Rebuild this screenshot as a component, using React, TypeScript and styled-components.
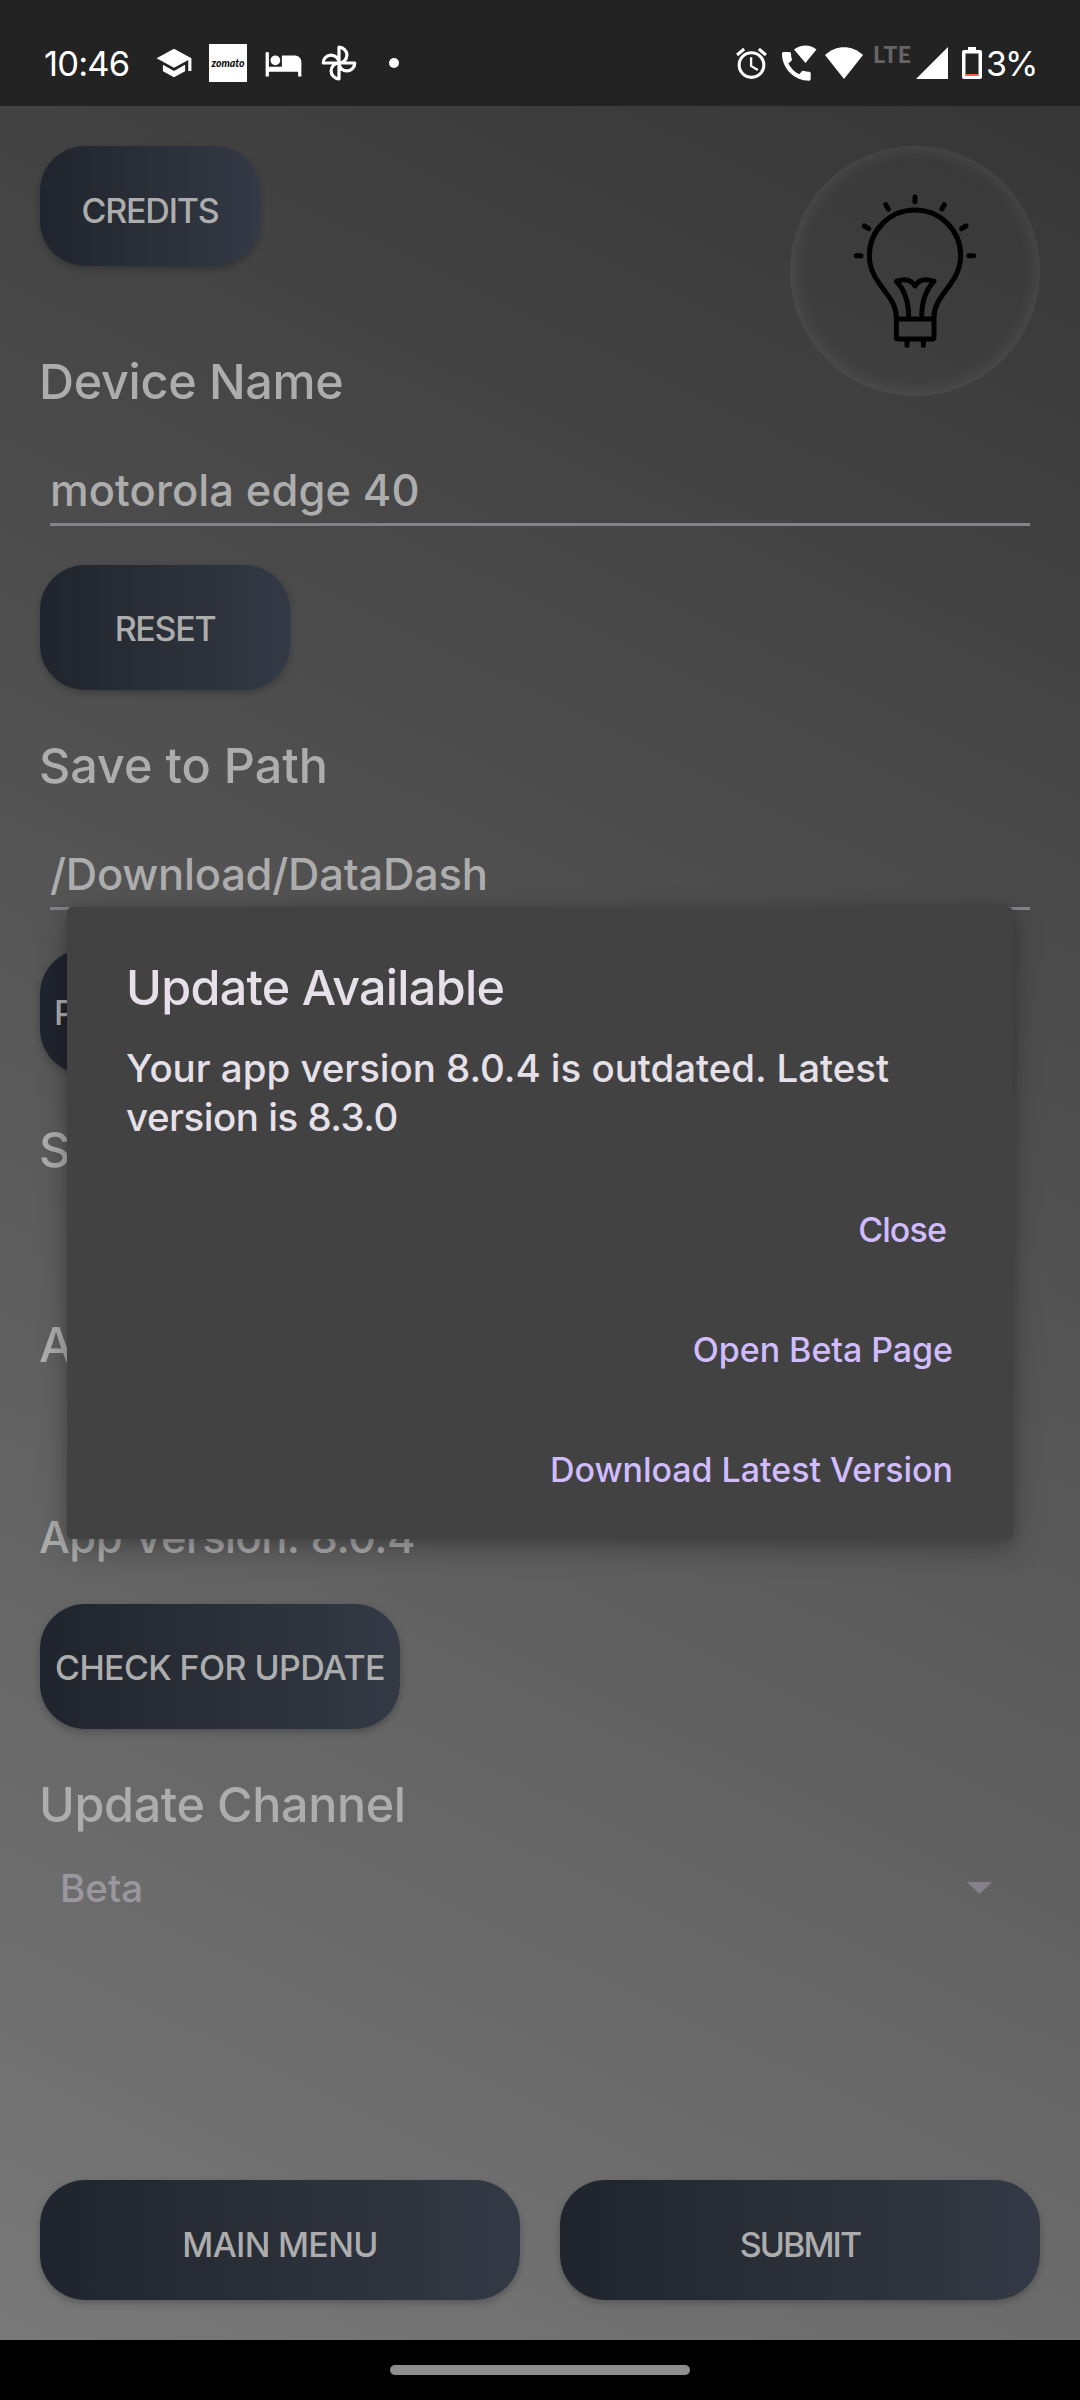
import React from "react";
import styled, { createGlobalStyle } from "styled-components";
import { MdSchool, MdHotel, MdAccessAlarm } from "react-icons/md";

const Global = createGlobalStyle`
  * { box-sizing: border-box; }
  body { margin: 0; background: #000; }
`;

const Screen = styled.div`
  position: relative;
  display: flex;
  flex-direction: column;
  width: 1080px;
  height: 2400px;
  overflow: hidden;
  font-family: Inter, "Open Sans", sans-serif;
  font-weight: 500;
  color: #adadad;
`;

const Text = styled.span<{ $size: number; $track?: number }>`
  font-size: ${(p) => p.$size}px;
  letter-spacing: ${(p) => p.$track ?? 0}px;
  white-space: nowrap;
`;

const StatusBar = styled.header`
  display: flex;
  align-items: center;
  justify-content: space-between;
  height: 106px;
  padding: 20px 45px 0 44px;
  background: #232323;
  color: #fff;
  font-weight: 400;
`;

const Cluster = styled.div`
  display: flex;
  align-items: center;
`;

const Slot = styled.div<{ $left?: number; $width?: number }>`
  display: flex;
  flex: none;
  margin-left: ${(p) => p.$left ?? 0}px;
  width: ${(p) => (p.$width ? `${p.$width}px` : "auto")};
`;

const Zomato = styled.div`
  display: flex;
  align-items: center;
  justify-content: center;
  width: 38px;
  height: 38px;
  background: #fff;
  color: #111;
  font: italic 900 10.5px/1 Lato, sans-serif;
`;

const Dot = styled.i`
  width: 10px;
  height: 10px;
  border-radius: 50%;
  background: #fff;
`;

const Network = styled.span`
  height: 32px;
  color: #656565;
  font: 900 23px/15px Lato, sans-serif;
  letter-spacing: 0.4px;
`;

const Content = styled.main`
  display: flex;
  flex-direction: column;
  height: 2234px;
  padding: 40px 40px 40px;
  background: linear-gradient(25.8deg, #787878, #363636);
`;

const Top = styled.div`
  display: flex;
  justify-content: space-between;
  height: 182px;
`;

const Button = styled.button<{ $w: number; $h?: number; $drop?: number; $start?: boolean }>`
  display: flex;
  flex: none;
  align-items: center;
  justify-content: ${(p) => (p.$start ? "flex-start" : "center")};
  width: ${(p) => p.$w}px;
  height: ${(p) => p.$h ?? 125}px;
  padding: ${(p) => p.$drop ?? 2}px 0 0 ${(p) => (p.$start ? 14 : 0)}px;
  border: 0;
  border-radius: 45px;
  background: linear-gradient(90deg, #20242d, #2a2f38 50%, #333a45);
  box-shadow: 0 3px 7px rgba(0, 0, 0, 0.24);
  color: #adadad;
  font-family: inherit;
  font-weight: inherit;
`;

const Lamp = styled.div`
  flex: none;
  width: 250px;
  height: 250px;
  border-radius: 50%;
  box-shadow: inset 0 0 20px rgba(255, 255, 255, 0.12);
`;

const Row = styled.div<{ $h: number; $drop?: number }>`
  display: flex;
  flex: none;
  align-items: center;
  height: ${(p) => p.$h}px;
  padding-top: ${(p) => p.$drop ?? 0}px;
  margin-left: -1px;
`;

const Field = styled.div<{ $gap?: number }>`
  display: flex;
  flex: none;
  align-items: center;
  height: 75px;
  margin: ${(p) => p.$gap ?? 0}px 10px 39px;
  padding-top: 6px;
  border-bottom: 3px solid #85828a;
`;

const Spinner = styled.div`
  display: flex;
  flex: none;
  align-items: center;
  justify-content: space-between;
  height: 82px;
  padding: 0 48px 0 20px;
  color: #9b979e;
`;

const Footer = styled.footer`
  display: flex;
  gap: 40px;
  margin-top: auto;
`;

const NavBar = styled.nav`
  display: flex;
  align-items: center;
  justify-content: center;
  height: 60px;
  background: #000;
`;

const Pill = styled.i`
  width: 300px;
  height: 10px;
  border-radius: 5px;
  background: #8e8e8e;
`;

const Dialog = styled.section`
  position: absolute;
  left: 67px;
  top: 907px;
  display: flex;
  flex-direction: column;
  width: 946px;
  height: 632px;
  padding: 48px 60px 0 59px;
  border-radius: 5px;
  background: #424242;
  box-shadow: 0 10px 30px rgba(0, 0, 0, 0.28), 0 2px 12px rgba(0, 0, 0, 0.12);
  color: #e6e0e9;
`;

const Heading = styled.h2`
  display: flex;
  align-items: center;
  height: 64px;
  margin: 0 0 25px;
  font-weight: inherit;
`;

const Message = styled.p`
  display: flex;
  flex-direction: column;
  margin: 0 0 27px;
  line-height: 49px;
`;

const Action = styled.button<{ $inset?: number }>`
  display: flex;
  flex: none;
  align-items: center;
  justify-content: flex-end;
  height: 120px;
  padding: 0 ${(p) => p.$inset ?? 0}px 0 0;
  border: 0;
  background: none;
  color: #d0bcff;
  font-family: inherit;
  font-weight: inherit;
`;

const Bulb = () => (
  <svg width="250" height="250" viewBox="90 78 750 750" fill="none" stroke="#000" strokeWidth="15" strokeLinecap="round" strokeLinejoin="round">
    <path d="M409 590C409 525 328 490 328 407A137 137 0 0 1 602 407C602 490 522 525 522 590V651Q522 657 516 657H415Q409 657 409 651ZM409 597H522" />
    <path d="M446 592C446 550 434 510 409 484Q449 470 465 498Q482 470 522 484C497 510 485 550 485 592" />
    <path d="M441 662V676M490 662V676" />
    <path d="M465 231V245M377 254L385 267M553 254L546 267M313 318L326 326M618 318L605 326M289 407H303M627 407H641" />
  </svg>
);

const Pinwheel = () => (
  <svg width="36" height="36" viewBox="0 0 36 36" fill="none" stroke="#fff" strokeWidth="3.2" strokeLinejoin="round">
    <path d="M18 18V2.200A7.900 7.900 0 0 1 18 18H33.800A7.900 7.900 0 0 1 18 18V33.800A7.900 7.900 0 0 1 18 18H2.200A7.900 7.900 0 0 1 18 18" />
  </svg>
);

const WifiCall = () => (
  <svg width="35" height="36" viewBox="0 0 35 36" fill="#fff">
    <path d="M23.500 18L12 4.500C19-.8 28-.8 34.500 4.500Z" />
    <path
      transform="translate(-4.800 2.200) scale(1.595)"
      d="M20.010 15.380c-1.230 0-2.420-.2-3.530-.56a.977.977 0 0 0-1.010.24l-1.570 1.970c-2.830-1.350-5.480-3.900-6.890-6.830l1.950-1.660c.27-.28.35-.67.24-1.020-.37-1.110-.56-2.300-.56-3.530 0-.54-.45-.99-.99-.99H4.190C3.650 3 3 3.240 3 3.990 3 13.280 10.730 21 20.010 21c.71 0 .99-.63.99-1.180v-3.450c0-.54-.45-.99-.99-.99z"
    />
  </svg>
);

export default function App() {
  return (
    <Screen>
      <Global />
      <StatusBar>
        <Cluster>
          <Slot $width={110.5}><Text $size={34.5} $track={-0.8}>10:46</Text></Slot>
          <MdSchool size={38} />
          <Slot $left={16.5}><Zomato>zomato</Zomato></Slot>
          <Slot $left={16.5}><MdHotel size={39} /></Slot>
          <Slot $left={18}><Pinwheel /></Slot>
          <Slot $left={32}><Dot /></Slot>
        </Cluster>
        <Cluster>
          <MdAccessAlarm size={37} />
          <Slot $left={12}><WifiCall /></Slot>
          <Slot $left={8}>
            <svg width="38" height="32" viewBox="0 0 38 32" fill="#fff"><path d="M19 32L0 8C11-2.500 27-2.500 38 8Z" /></svg>
          </Slot>
          <Slot $left={10} $width={37}><Network>LTE</Network></Slot>
          <Slot $left={6}>
            <svg width="32" height="32" viewBox="0 0 32 32" fill="#fff"><path d="M32 0V32H0Z" /></svg>
          </Slot>
          <Slot $left={13.5}>
            <svg width="20" height="32" viewBox="0 0 20 32"><path d="M6 0h8v3h4q2 0 2 2v25q0 2-2 2H2q-2 0-2-2V5q0-2 2-2h4ZM3.500 6.500v22h13v-22Z" fill="#fff" fillRule="evenodd" /><path d="M3.500 27h13v1.500h-13Z" fill="#f4633a" /></svg>
          </Slot>
          <Slot $left={4.5} $width={49}><Text $size={34} $track={-2}>3%</Text></Slot>
        </Cluster>
      </StatusBar>

      <Content>
        <Top>
          <Button $w={220} $h={120} $drop={9}><Text $size={34} $track={-1.2}>CREDITS</Text></Button>
          <Lamp><Bulb /></Lamp>
        </Top>
        <Row $h={107}><Text $size={48.5} $track={-0.3}>Device Name</Text></Row>
        <Field $gap={16}><Text $size={43.5} $track={0.08}>motorola edge 40</Text></Field>
        <Button $w={250}><Text $size={34} $track={-1.3}>RESET</Text></Button>
        <Row $h={145} $drop={6}><Text $size={48.5}>Save to Path</Text></Row>
        <Field><Text $size={43.5} $track={-0.25}>/Download/DataDash</Text></Field>
        <Button $w={320} $start><Text $size={34}>P</Text></Button>
        <Row $h={150}><Text $size={48.5}>S</Text></Row>
        <Row $h={240}><Text $size={48.5}>A</Text></Row>
        <Row $h={140} $drop={5}><Text $size={43.5} $track={-0.55}>App Version: 8.0.4</Text></Row>
        <Button $w={360}><Text $size={34} $track={-0.6}>CHECK FOR UPDATE</Text></Button>
        <Row $h={118} $drop={32}><Text $size={48.5} $track={-0.4}>Update Channel</Text></Row>
        <Spinner>
          <Text $size={38.5}>Beta</Text>
          <svg width="25" height="12" viewBox="0 0 25 12" fill="#85818b"><path d="M0 0H25L12.500 12Z" /></svg>
        </Spinner>
        <Footer>
          <Button $w={480} $h={120} $drop={9}><Text $size={34} $track={-0.7}>MAIN MENU</Text></Button>
          <Button $w={480} $h={120} $drop={9}><Text $size={34} $track={-1.9}>SUBMIT</Text></Button>
        </Footer>
      </Content>

      <NavBar><Pill /></NavBar>

      <Dialog>
        <Heading><Text $size={48.5} $track={-0.72}>Update Available</Text></Heading>
        <Message>
          <Text $size={38.5} $track={-0.04}>Your app version 8.0.4 is outdated. Latest</Text>
          <Text $size={38.5} $track={-0.48}>version is 8.3.0</Text>
        </Message>
        <Action $inset={7}><Text $size={34} $track={-0.9}>Close</Text></Action>
        <Action><Text $size={34} $track={-0.06}>Open Beta Page</Text></Action>
        <Action><Text $size={34} $track={-0.04}>Download Latest Version</Text></Action>
      </Dialog>
    </Screen>
  );
}
